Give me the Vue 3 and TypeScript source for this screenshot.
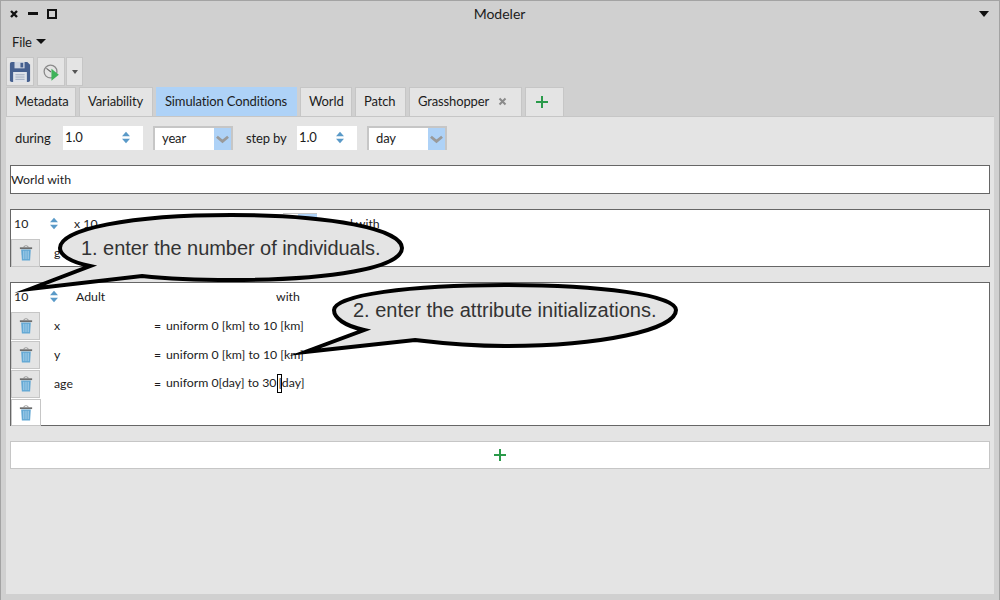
<template>
  <div class="window">
    <header class="titlebar">
      <div class="win-btns">
        <svg width="8" height="8" viewBox="0 0 8 8"><path d="M1 1l6 6M7 1l-6 6" stroke="#111" stroke-width="2.4" /></svg>
        <span class="win-min"></span>
        <span class="win-max"></span>
      </div>
      <span class="win-title">Modeler</span>
      <span class="win-menu"></span>
    </header>

    <nav class="menubar">
      <span>File</span>
      <span class="caret"></span>
    </nav>

    <div class="toolbar">
      <button class="tool">
        <svg width="22" height="22" viewBox="0 0 24 24">
          <path d="M1 3q0-2 2-2h17l3 3v17q0 2-2 2H3q-2 0-2-2z" fill="#46608f" />
          <rect x="6" y="1" width="11" height="7" fill="#cfd6e2" />
          <rect x="12.500" y="2" width="3" height="5" fill="#46608f" />
          <rect x="4.500" y="12" width="15" height="11" fill="#dfe3ea" />
          <path d="M7 15h10M7 17.500h10M7 20h10" stroke="#9aa6bb" stroke-width="1" />
        </svg>
      </button>
      <button class="tool second">
        <svg width="22" height="22" viewBox="0 0 24 24">
          <circle cx="11.500" cy="11.500" r="7" fill="#e4e4e4" stroke="#8a8a8a" stroke-width="1.400" />
          <path d="M7 8l5 4" stroke="#666" stroke-width="1.200" />
          <path d="M12.500 8.500v13l8-6.500z" fill="#3fb35a" />
        </svg>
      </button>
      <button class="tool tool-drop"><span class="caret small"></span></button>
    </div>

    <div class="tabs">
      <div
        v-for="t in tabs"
        :key="t.label"
        class="tab"
        :class="{ active: t.active }"
        :style="{ width: `${t.width}px` }"
      >
        {{ t.label }}
        <svg v-if="t.closable" class="tab-x" width="9" height="9" viewBox="0 0 9 9"><path d="M1.500 1.500l6 6M7.500 1.500l-6 6" stroke="#8a8a8a" stroke-width="2" /></svg>
      </div>
      <div class="tab tab-add">
        <svg width="14" height="14" viewBox="0 0 14 14"><path d="M7 1v12M1 7h12" stroke="#2a9a4a" stroke-width="2" /></svg>
      </div>
    </div>

    <main class="panel">
      <section class="conditions">
        <span class="cond-label">during</span>
        <div class="spin-field wide">
          <span>1.0</span>
          <svg class="spin" width="8" height="13" viewBox="0 0 9 13"><path d="M4.500 0L9 5H0zM4.500 13L0 8h9z" fill="#5a9ac8" /></svg>
        </div>
        <div class="select">
          <span>year</span>
          <i class="select-btn"><svg width="13" height="9" viewBox="0 0 14 9"><path d="M1 1.500l6 5 6-5" fill="none" stroke="#9a9a9a" stroke-width="3" /></svg></i>
        </div>
        <span class="cond-label step">step by</span>
        <div class="spin-field">
          <span>1.0</span>
          <svg class="spin" width="8" height="13" viewBox="0 0 9 13"><path d="M4.500 0L9 5H0zM4.500 13L0 8h9z" fill="#5a9ac8" /></svg>
        </div>
        <div class="select">
          <span>day</span>
          <i class="select-btn"><svg width="13" height="9" viewBox="0 0 14 9"><path d="M1 1.500l6 5 6-5" fill="none" stroke="#9a9a9a" stroke-width="3" /></svg></i>
        </div>
      </section>

      <div class="box world">World with</div>

      <div class="box group">
        <div class="count-row">
          <span class="count">10</span>
          <svg class="spin-sm" width="8" height="13" viewBox="0 0 9 13"><path d="M4.500 0L9 5H0zM4.500 13L0 8h9z" fill="#5a9ac8" /></svg>
          <span class="size">x 10</span>
          <i class="mini-select"><b></b></i>
          <span class="with-top">d with</span>
        </div>
        <div class="attr-row">
          <button class="trash">
            <svg width="14" height="16" viewBox="0 0 16 18"><use href="#bin" /></svg>
          </button>
          <span class="attr-name">g</span>
        </div>
      </div>

      <div class="box group adults">
        <div class="count-row">
          <span class="count">10</span>
          <svg class="spin-sm" width="8" height="13" viewBox="0 0 9 13"><path d="M4.500 0L9 5H0zM4.500 13L0 8h9z" fill="#5a9ac8" /></svg>
          <span class="adult">Adult</span>
          <span class="with">with</span>
        </div>
        <div v-for="a in attrs" :key="a.name" class="attr-row">
          <button class="trash">
            <svg width="14" height="16" viewBox="0 0 16 18"><use href="#bin" /></svg>
          </button>
          <span class="attr-name">{{ a.name }}</span>
          <span class="attr-eq">=</span>
          <span class="attr-val">uniform {{ a.from }} to <template v-if="a.caret">30<i class="cursor"></i>[day]</template><template v-else>{{ a.to }}</template></span>
        </div>
        <div class="attr-row last">
          <button class="trash white">
            <svg width="14" height="16" viewBox="0 0 16 18"><use href="#bin" /></svg>
          </button>
        </div>
      </div>

      <div class="add-box">
        <svg width="14" height="14" viewBox="0 0 14 14"><path d="M7 1v12M1 7h12" stroke="#2a9a4a" stroke-width="2" /></svg>
      </div>
    </main>

    <svg class="defs" width="0" height="0">
      <symbol id="bin" viewBox="0 0 16 18">
        <path d="M5.500 2.500q0-2 2.500-2t2.500 2" fill="none" stroke="#8a8a8a" stroke-width="1" />
        <rect x="1" y="2.500" width="14" height="2" fill="#6d6d6d" />
        <path d="M2.500 5h11l-.8 12.500H3.300z" fill="#63a8d4" />
        <path d="M5.500 6.500v9.500M8 6.500v9.500M10.500 6.500v9.500" stroke="#b5d8ee" stroke-width="1" />
      </symbol>
    </svg>

    <svg class="bubbles" width="1000" height="600" viewBox="0 0 1000 600">
      <path d="M30 289L90 266C70 262 60 255 60 248C60 229 130 215 231 215C330 215 402 229 402 248C402 268 330 280 231 280C195 280 170 279 142 276Z" class="bubble-shape" />
      <path d="M305 352L364 330C345 326 334 318 334 310C334 295 410 285 505 285C600 285 676 295 676 310C676 330 600 346 505 346C470 346 440 343 415 340Z" class="bubble-shape" />
    </svg>
    <span class="bubble-text one">1. enter the number of individuals.</span>
    <span class="bubble-text two">2. enter the attribute initializations.</span>
  </div>
</template>

<script setup lang="ts">
interface Tab {
  label: string;
  width: number;
  active?: boolean;
  closable?: boolean;
}

const tabs: Tab[] = [
  { label: 'Metadata', width: 70 },
  { label: 'Variability', width: 74 },
  { label: 'Simulation Conditions', width: 141, active: true },
  { label: 'World', width: 52 },
  { label: 'Patch', width: 51 },
  { label: 'Grasshopper', width: 113, closable: true }
];

const attrs = [
  { name: 'x', from: '0 [km]', to: '10 [km]', caret: false },
  { name: 'y', from: '0 [km]', to: '10 [km]', caret: false },
  { name: 'age', from: '0[day]', to: '', caret: true }
];
</script>

<style>
html,
body {
  margin: 0;
  background: #d0d0d0;
}
</style>

<style scoped>
.window {
  position: relative;
  box-sizing: border-box;
  width: 1000px;
  height: 600px;
  overflow: hidden;
  border: 1px solid #a3a3a3;
  border-bottom: 0;
  background: #d0d0d0;
  color: #1c1c1c;
  font-family: Lato, 'Noto Sans', sans-serif;
  font-size: 13px;
  letter-spacing: -0.13px;
}

.titlebar {
  display: grid;
  grid-template-columns: 1fr auto 1fr;
  align-items: center;
  box-sizing: border-box;
  height: 27px;
  padding: 0 10px 2px 9px;
}

.win-btns {
  display: flex;
  align-items: center;
}

.win-min {
  width: 10px;
  height: 3px;
  margin-left: 10px;
  background: #111;
}

.win-max {
  box-sizing: border-box;
  width: 10px;
  height: 10px;
  margin-left: 9px;
  border: 2px solid #111;
}

.win-title {
  font-size: 14px;
  letter-spacing: 0;
}

.win-menu {
  justify-self: end;
  border-left: 5px solid transparent;
  border-right: 5px solid transparent;
  border-top: 6px solid #111;
}

.menubar {
  display: flex;
  align-items: center;
  gap: 4px;
  box-sizing: border-box;
  height: 29px;
  padding: 0 0 2px 11px;
}

.caret {
  border-left: 5px solid transparent;
  border-right: 5px solid transparent;
  border-top: 5px solid #111;
}

.caret.small {
  display: block;
  border-left-width: 3.500px;
  border-right-width: 3.500px;
  border-top: 4px solid #555;
}

.toolbar {
  display: flex;
  height: 30px;
  padding-left: 5px;
}

.tool {
  display: flex;
  align-items: center;
  justify-content: center;
  box-sizing: border-box;
  width: 28px;
  height: 29px;
  padding: 0;
  border: 1px solid #c6c6c6;
  background: #e4e4e4;
}

.tool.second {
  margin-left: 3px;
}

.tool-drop {
  width: 17px;
  margin-left: 1px;
}

.tabs {
  display: flex;
  gap: 3px;
  height: 29px;
  padding-left: 5px;
}

.tab {
  display: flex;
  align-items: center;
  box-sizing: border-box;
  height: 29px;
  padding: 0 0 2px 8px;
  border: 1px solid #c6c6c6;
  border-bottom: 0;
  background: #e4e4e4;
  white-space: nowrap;
}

.tab.active {
  border-color: #aed2f7;
  background: #aed2f7;
}

.tab-x {
  margin-left: 9px;
}

.tab-add {
  justify-content: center;
  width: 39px;
  padding: 0 6px 1px 0;
}

.panel {
  box-sizing: border-box;
  height: 478px;
  margin: 0 5px;
  padding: 9px 4px 0;
  border-top: 1px solid #c6c6c6;
  background: #e4e4e4;
}

.conditions {
  display: flex;
  align-items: center;
  height: 24px;
  padding-left: 5px;
}

.cond-label {
  width: 48px;
}

.cond-label.step {
  width: 51px;
  margin-left: 13px;
}

.spin-field {
  display: flex;
  align-items: center;
  justify-content: space-between;
  box-sizing: border-box;
  width: 60px;
  height: 24px;
  padding: 0 13px 2px 2px;
  background: #fff;
}

.spin-field.wide {
  width: 80px;
}

.select {
  display: flex;
  align-items: center;
  justify-content: space-between;
  box-sizing: border-box;
  width: 80px;
  height: 24px;
  margin-left: 10px;
  padding-left: 7px;
  border: 2px solid #c6c6c6;
  border-bottom: 0;
  background: #fff;
}

.select span {
  margin-bottom: 2px;
}

.select-btn {
  display: flex;
  align-items: center;
  justify-content: center;
  width: 17px;
  height: 22px;
  background: #aed2f7;
}

.box {
  box-sizing: border-box;
  border: 1px solid #666;
  background: #fff;
  font-size: 12.300px;
  letter-spacing: 0;
}

.world {
  display: flex;
  align-items: center;
  height: 29px;
  margin-top: 15px;
}

.group {
  height: 58px;
  margin-top: 15px;
}

.adults {
  height: 144px;
}

.count-row {
  display: flex;
  align-items: center;
  box-sizing: border-box;
  height: 29px;
  padding-bottom: 2px;
}

.count {
  box-sizing: border-box;
  width: 39px;
  padding-left: 3px;
}

.spin-sm {
  flex: none;
}

.size {
  width: 209px;
  margin-left: 16px;
}

.mini-select {
  display: flex;
  justify-content: flex-end;
  align-self: flex-start;
  box-sizing: border-box;
  width: 34px;
  height: 24px;
  margin-top: 3px;
  border-top: 1px solid #c6c6c6;
}

.mini-select b {
  width: 19px;
  height: 23px;
  background: #aed2f7;
}

.with-top {
  margin-left: 29px;
}

.adult {
  width: 200px;
  margin-left: 18px;
}

.attr-row {
  display: flex;
  align-items: center;
  box-sizing: border-box;
  height: 29px;
  padding-bottom: 2px;
}

.attr-row.last {
  height: 27px;
  padding-bottom: 0;
}

.trash {
  display: flex;
  align-items: center;
  justify-content: center;
  align-self: flex-start;
  box-sizing: border-box;
  width: 29px;
  height: 28px;
  padding: 0;
  border: 1px solid #c6c6c6;
  background: #e4e4e4;
}

.trash.white {
  width: 30px;
  height: 27px;
  background: #fff;
}

.attr-name {
  width: 100px;
  margin-left: 14px;
}

.attr-eq {
  width: 12px;
}

.cursor {
  display: inline-block;
  box-sizing: border-box;
  width: 5px;
  height: 19px;
  margin-right: -3px;
  border: 1px solid #000;
  vertical-align: middle;
}

.add-box {
  display: flex;
  align-items: center;
  justify-content: center;
  box-sizing: border-box;
  height: 28px;
  margin-top: 15px;
  border: 1px solid #c6c6c6;
  background: #fff;
}

.defs {
  position: absolute;
}

.bubbles {
  position: absolute;
  left: -1px;
  top: -1px;
}

.bubble-shape {
  fill: #e4e4e4;
  stroke: #000;
  stroke-width: 4;
  stroke-linejoin: miter;
  stroke-miterlimit: 10;
}

.bubble-text {
  position: absolute;
  color: #333;
  font-family: 'Liberation Sans', Arial, sans-serif;
  font-size: 20px;
  letter-spacing: 0;
  white-space: nowrap;
}

.bubble-text.one {
  left: 80px;
  top: 236px;
  letter-spacing: -0.05px;
}

.bubble-text.two {
  left: 352px;
  top: 298px;
}
</style>
